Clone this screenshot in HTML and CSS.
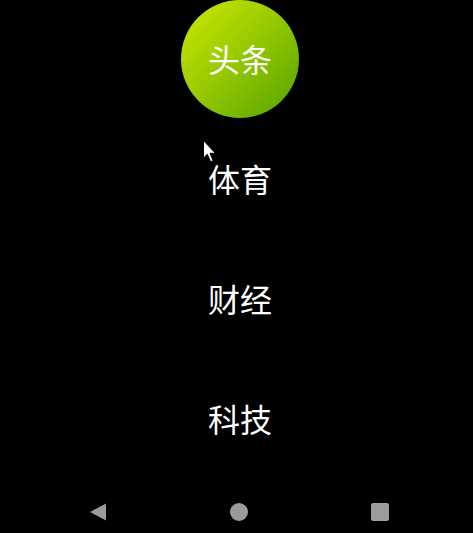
FILE: index.html
```html
<!DOCTYPE html>
<html lang="zh">
<head>
<meta charset="utf-8">
<link rel="stylesheet" href="styles.css">
</head>
<body>
<div class="screen">
  <ul class="tabs">
    <li class="tab"><span class="bubble">头条</span></li>
    <li class="tab">体育</li>
    <li class="tab">财经</li>
    <li class="tab">科技</li>
  </ul>
  <nav class="navbar">
    <svg class="nav-icon" width="18" height="20" viewBox="0 0 18 20"><path d="M1 10 L17 1.5 L17 18.5 Z" fill="#9b9b9b"/></svg>
    <svg class="nav-icon" width="18" height="18" viewBox="0 0 18 18"><circle cx="9" cy="9" r="9" fill="#9b9b9b"/></svg>
    <svg class="nav-icon" width="18" height="18" viewBox="0 0 18 18"><rect x="0" y="0" width="18" height="18" rx="2" fill="#9b9b9b"/></svg>
  </nav>
  <svg class="cursor" width="16" height="26" viewBox="0 0 16 26">
    <path d="M0.5 0.5 L0.5 18 L4.3 14.2 L7.6 21.8 L10.2 20.7 L7 13.3 L12.4 13.3 Z" fill="#fff" stroke="#000" stroke-width="1"/>
  </svg>
</div>
</body>
</html>
```
FILE: styles.css
```css
html, body {
  margin: 0;
  padding: 0;
  background: #000;
  overflow: hidden;
}
.screen {
  position: relative;
  width: 480px;
  height: 533px;
  display: flex;
  flex-direction: column;
  font-family: "Noto Sans CJK SC", "Noto Sans", sans-serif;
}
.tabs {
  list-style: none;
  margin: 0;
  padding: 0;
  display: flex;
  flex-direction: column;
}
.tab {
  height: 120px;
  box-sizing: border-box;
  padding-bottom: 4px;
  display: flex;
  align-items: center;
  justify-content: center;
  color: #fff;
  font-size: 32px;
  line-height: 1;
}
.tab:first-child {
  align-items: flex-start;
  padding-bottom: 0;
}
.bubble {
  width: 118px;
  height: 118px;
  border-radius: 50%;
  background: linear-gradient(135deg, #d2e800 0%, #93c800 50%, #52a300 100%);
  display: flex;
  align-items: center;
  justify-content: center;
  padding-bottom: 2px;
  box-sizing: border-box;
}
.navbar {
  flex: 1;
  display: flex;
  align-items: center;
  justify-content: space-between;
  padding: 10px 91px 0 89px;
}
.cursor {
  position: absolute;
  left: 203px;
  top: 140px;
}
```
